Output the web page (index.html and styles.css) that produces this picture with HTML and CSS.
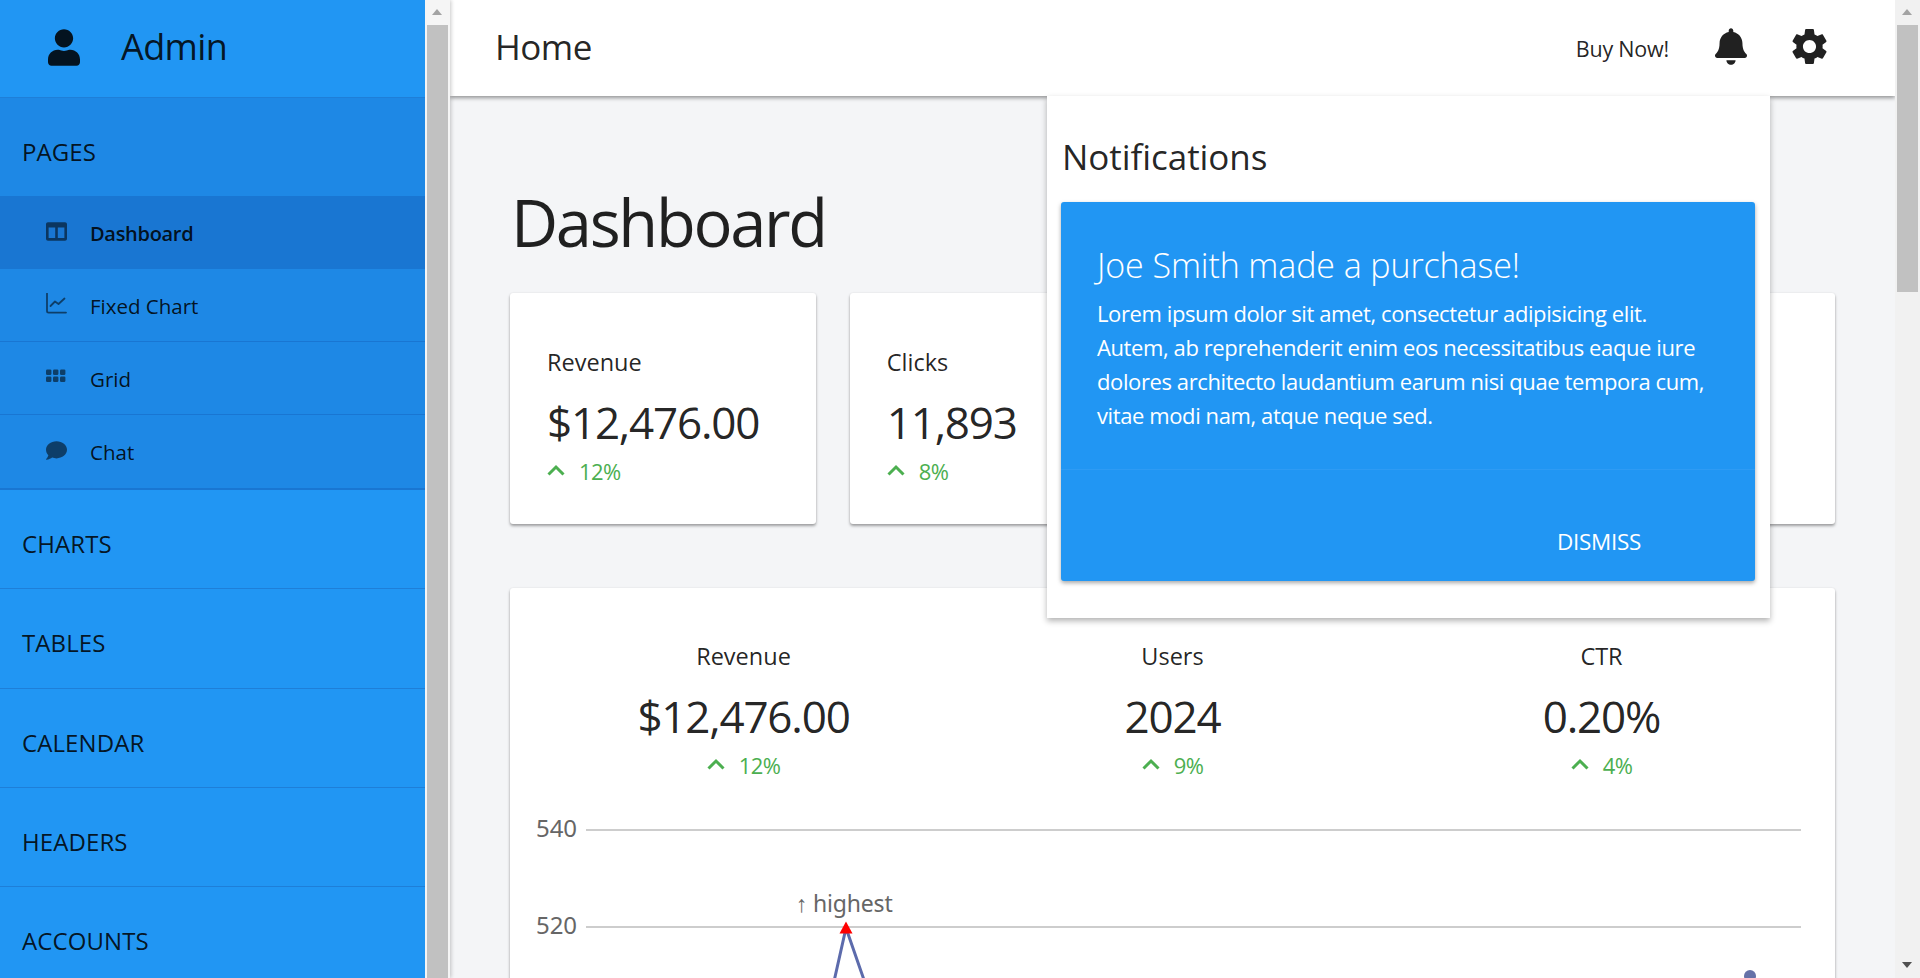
FILE: index.html
```html
<!DOCTYPE html>
<html lang="en">
<head>
<meta charset="utf-8">
<title>Dashboard</title>
<link rel="stylesheet" href="styles.css">
</head>
<body>
<div class="app">
  <aside class="side">
    <nav class="nav">
      <div class="brand">
        <svg class="brand-icon" viewBox="0 0 448 512"><path d="M224 256c70.7 0 128-57.3 128-128S294.7 0 224 0 96 57.3 96 128s57.3 128 128 128zm89.6 32h-16.7c-22.2 10.2-46.9 16-72.9 16s-50.6-5.8-72.9-16h-16.7C60.2 288 0 348.2 0 422.4V464c0 26.5 21.5 48 48 48h352c26.5 0 48-21.5 48-48v-41.6c0-74.2-60.2-134.4-134.4-134.4z"/></svg>
        <span class="brand-name">Admin</span>
      </div>
      <div class="group group-open">PAGES</div>
      <ul class="items">
        <li class="item item-active">
          <svg class="item-icon" viewBox="0 0 512 512"><path d="M464 32H48C21.49 32 0 53.49 0 80v352c0 26.51 21.49 48 48 48h416c26.51 0 48-21.49 48-48V80c0-26.51-21.49-48-48-48zM224 416H64V160h160v256zm224 0H288V160h160v256z"/></svg>
          <span>Dashboard</span>
        </li>
        <li class="item">
          <svg class="item-icon" viewBox="0 0 21 21"><path class="item-stroke" d="M1 0.5V18a1.600 1.600 0 0 0 1.600 1.600H20"/><path class="item-stroke" d="M4.500 13 9 8.500l3.500 2.500L18.500 5.500"/></svg>
          <span>Fixed Chart</span>
        </li>
        <li class="item">
          <svg class="item-icon" viewBox="0 0 21 21"><rect x="0" y="3.500" width="5.400" height="5.400" rx="1.200"/><rect x="7" y="3.500" width="5.400" height="5.400" rx="1.200"/><rect x="14" y="3.500" width="5.400" height="5.400" rx="1.200"/><rect x="0" y="10.500" width="5.400" height="5.400" rx="1.200"/><rect x="7" y="10.500" width="5.400" height="5.400" rx="1.200"/><rect x="14" y="10.500" width="5.400" height="5.400" rx="1.200"/></svg>
          <span>Grid</span>
        </li>
        <li class="item">
          <svg class="item-icon" viewBox="0 0 512 512"><path d="M256 32C114.6 32 0 125.1 0 240c0 49.6 21.4 95 57 130.7C44.5 421.1 2.7 466 2.2 466.5c-2.2 2.3-2.8 5.7-1.5 8.7S4.8 480 8 480c66.3 0 116-31.8 140.6-51.4 32.7 12.3 69 19.4 107.4 19.4 141.4 0 256-93.1 256-208S397.4 32 256 32z"/></svg>
          <span>Chat</span>
        </li>
      </ul>
      <div class="group">CHARTS</div>
      <div class="group">TABLES</div>
      <div class="group">CALENDAR</div>
      <div class="group">HEADERS</div>
      <div class="group">ACCOUNTS</div>
    </nav>
    <div class="scrollbar scrollbar-side">
      <div class="arrow-up"></div>
      <div class="thumb thumb-long"></div>
    </div>
  </aside>

  <main class="main">
    <header class="topbar">
      <span class="page-title">Home</span>
      <div class="top-actions">
        <span class="buy">Buy Now!</span>
        <svg class="bell" viewBox="0 0 448 512"><path d="M224 512c35.32 0 63.97-28.65 63.97-64H160.03c0 35.35 28.65 64 63.97 64zm215.39-149.71c-19.32-20.76-55.47-51.99-55.47-154.29 0-77.7-54.48-139.9-127.94-155.16V32c0-17.67-14.32-32-31.98-32s-31.98 14.33-31.98 32v20.84C118.56 68.1 64.08 130.3 64.08 208c0 102.3-36.15 133.53-55.47 154.29-6 6.45-8.66 14.16-8.61 21.71.11 16.4 12.98 32 32.1 32h383.8c19.12 0 32-15.6 32.1-32 .05-7.55-2.61-15.27-8.61-21.71z"/></svg>
        <svg class="gear" viewBox="2.4 2 19.2 20"><path d="M19.14 12.94c.04-.3.06-.61.06-.94 0-.32-.02-.64-.07-.94l2.03-1.58c.18-.14.23-.41.12-.61l-1.92-3.32c-.12-.22-.37-.29-.59-.22l-2.39.96c-.5-.38-1.03-.7-1.62-.94l-.36-2.54c-.04-.24-.24-.41-.48-.41h-3.84c-.24 0-.43.17-.47.41l-.36 2.54c-.59.24-1.13.57-1.62.94l-2.39-.96c-.22-.08-.47 0-.59.22L2.74 8.87c-.12.21-.08.47.12.61l2.03 1.58c-.05.3-.09.63-.09.94s.02.64.07.94l-2.03 1.58c-.18.14-.23.41-.12.61l1.92 3.32c.12.22.37.29.59.22l2.39-.96c.5.38 1.03.7 1.62.94l.36 2.54c.05.24.24.41.48.41h3.84c.24 0 .44-.17.47-.41l.36-2.54c.59-.24 1.13-.56 1.62-.94l2.39.96c.22.08.47 0 .59-.22l1.92-3.32c.12-.22.07-.47-.12-.61l-2.01-1.58zM12 15.6c-1.98 0-3.6-1.62-3.6-3.6s1.62-3.6 3.6-3.6 3.6 1.62 3.6 3.6-1.62 3.6-3.6 3.6z"/></svg>
      </div>
    </header>

    <section class="content">
      <h1 class="heading">Dashboard</h1>
      <div class="stat-row">
        <article class="card stat-card">
          <div class="stat-label">Revenue</div>
          <div class="stat-value">$12,476.00</div>
          <div class="delta"><svg class="chev" viewBox="0 0 18 12"><path d="M1.5 10.5 9 3l7.5 7.5"/></svg><span>12%</span></div>
        </article>
        <article class="card stat-card">
          <div class="stat-label">Clicks</div>
          <div class="stat-value">11,893</div>
          <div class="delta"><svg class="chev" viewBox="0 0 18 12"><path d="M1.5 10.5 9 3l7.5 7.5"/></svg><span>8%</span></div>
        </article>
        <article class="card stat-card"></article>
        <article class="card stat-card"></article>
      </div>

      <article class="card chart-card">
        <div class="summary">
          <div class="summary-col">
            <div class="stat-label">Revenue</div>
            <div class="stat-value">$12,476.00</div>
            <div class="delta"><svg class="chev" viewBox="0 0 18 12"><path d="M1.5 10.5 9 3l7.5 7.5"/></svg><span>12%</span></div>
          </div>
          <div class="summary-col">
            <div class="stat-label">Users</div>
            <div class="stat-value">2024</div>
            <div class="delta"><svg class="chev" viewBox="0 0 18 12"><path d="M1.5 10.5 9 3l7.5 7.5"/></svg><span>9%</span></div>
          </div>
          <div class="summary-col">
            <div class="stat-label">CTR</div>
            <div class="stat-value">0.20%</div>
            <div class="delta"><svg class="chev" viewBox="0 0 18 12"><path d="M1.5 10.5 9 3l7.5 7.5"/></svg><span>4%</span></div>
          </div>
        </div>
        <svg class="chart" viewBox="0 0 1325 240" width="1325" height="240">
          <line class="grid-line" x1="76" y1="30" x2="1291" y2="30"/>
          <line class="grid-line" x1="76" y1="127" x2="1291" y2="127"/>
          <text class="axis" x="26" y="37">540</text>
          <text class="axis" x="26" y="134">520</text>
          <text class="note" x="286" y="112">↑ highest</text>
          <path class="series" d="M314 226 336 128 370 226"/>
          <path class="peak" d="M336 121.500 342.500 133.500H329.500Z"/>
          <circle class="dot" cx="1240" cy="176" r="6"/>
        </svg>
      </article>
    </section>

    <div class="panel">
      <h2 class="panel-title">Notifications</h2>
      <div class="note-card">
        <div class="note-body">
          <h3 class="note-title">Joe Smith made a purchase!</h3>
          <p class="note-text">Lorem ipsum dolor sit amet, consectetur adipisicing elit. Autem, ab reprehenderit enim eos necessitatibus eaque iure dolores architecto laudantium earum nisi quae tempora cum, vitae modi nam, atque neque sed.</p>
        </div>
        <div class="note-actions"><span class="dismiss">DISMISS</span></div>
      </div>
    </div>
  </main>

  <div class="scrollbar scrollbar-page">
    <div class="arrow-up"></div>
    <div class="thumb thumb-page"></div>
    <div class="spacer"></div>
    <div class="arrow-down"></div>
  </div>
</div>
</body>
</html>
```

FILE: styles.css
```css
* { box-sizing: border-box; }
html, body { margin: 0; height: 100%; overflow: hidden; }
body {
  font-family: "Open Sans", "Noto Sans", sans-serif;
  color: rgba(0, 0, 0, .87);
  background: #f4f5f7;
}
h1, h2, h3, p, ul { margin: 0; padding: 0; list-style: none; font-weight: 400; }

.app { display: flex; height: 978px; overflow: hidden; }

/* sidebar */
.side { display: flex; flex: 0 0 450px; height: 978px; position: relative; z-index: 3; box-shadow: 1px 0 4px rgba(0,0,0,.22); }
.nav { width: 425px; height: 978px; overflow: hidden; background: #2196f3; }
.brand { display: flex; align-items: center; height: 98px; padding-left: 48px; border-bottom: 1px solid #1e7fd8; }
.brand-icon { width: 32px; height: 37px; fill: rgba(0,0,0,.87); margin-top: -3px; }
.brand-name { margin-left: 41px; font-size: 36px; font-weight: 400; line-height: 48px; margin-top: -3px; letter-spacing: -.6px; }
.group {
  display: flex; align-items: center;
  height: 99.33px; padding: 9px 0 0 22px;
  font-size: 24px; letter-spacing: .1px; font-weight: 400;
  border-bottom: 1px solid #1e7fd8;
}
.group-open { height: 98px; background: #1e88e5; border-bottom: 0; }
.items { background: #1e88e5; border-bottom: 2px solid #1976d2; }
.item {
  display: flex; align-items: center;
  height: 73px; padding: 1px 0 0 46px;
  font-size: 20.5px; letter-spacing: 0;
  border-bottom: 1px solid #1976d2;
}
.item:last-child { border-bottom: 0; }
.item-active { background: #1976d2; font-weight: 600; border-bottom: 0; font-size: 20px; letter-spacing: -.3px; }
.item-icon { width: 21px; height: 21px; flex: none; margin: -4px 23px 0 0; fill: rgba(0,0,0,.54); }
.item-stroke { fill: none; stroke: rgba(0,0,0,.54); stroke-width: 1.800; stroke-linecap: round; stroke-linejoin: round; }

/* scrollbars */
.scrollbar { display: flex; flex-direction: column; flex: none; background: #f1f1f1; }
.scrollbar-side { width: 25px; padding: 0 2px; background: #f5f5f5; }
.scrollbar-page { width: 25px; padding: 0 2px; }
.arrow-up { height: 25px; position: relative; flex: none; }
.arrow-up::before {
  content: ""; position: absolute; left: 5px; top: 9px;
  border: 5.500px solid transparent; border-top: 0; border-bottom: 6px solid #a3a3a3;
}
.arrow-down { height: 25px; position: relative; flex: none; }
.arrow-down::before {
  content: ""; position: absolute; left: 5px; top: 9px;
  border: 5.500px solid transparent; border-bottom: 0; border-top: 6px solid #505050;
}
.thumb { background: #c1c1c1; flex: none; }
.thumb-long { height: 953px; }
.thumb-page { height: 267px; }
.spacer { flex: 1; }

/* main */
.main { flex: 1; position: relative; min-width: 0; height: 978px; overflow: hidden; background: #f4f5f7; }
.topbar {
  display: flex; align-items: center; justify-content: space-between;
  height: 96px; padding: 0 68px 0 45px;
  background: #fff; box-shadow: 0 2px 4px rgba(0,0,0,.4);
  position: relative; z-index: 1;
}
.page-title { font-size: 35px; line-height: 48px; letter-spacing: -.5px; font-weight: 400; margin-top: -2px; }
.top-actions { display: flex; align-items: center; }
.buy { font-size: 21.5px; letter-spacing: -.2px; margin-right: 46px; margin-top: 1px; }
.bell { width: 32px; height: 37px; fill: #212121; margin-right: 45px; margin-top: -3px; }
.gear { width: 35px; height: 37px; fill: #212121; margin-top: -3px; }

.content { padding: 0 60px; }
.heading { font-size: 65px; line-height: 88px; padding-top: 82px; height: 197px; letter-spacing: -2.3px; font-weight: 400; margin-left: 1px; }
.card { background: #fff; border-radius: 3px; box-shadow: 0 2px 3px rgba(0,0,0,.35), 0 0 2px rgba(0,0,0,.08); }
.stat-row { display: grid; grid-template-columns: repeat(4, 1fr); gap: 34px; }
.stat-card { height: 231px; padding: 53px 0 0 37px; }
.stat-label { font-size: 23.5px; line-height: 32px; letter-spacing: 0; }
.stat-value { font-size: 44px; line-height: 58px; margin-top: 15px; letter-spacing: -1.2px; font-weight: 400; }
.delta { display: flex; align-items: center; margin-top: 5px; font-size: 22px; line-height: 30px; letter-spacing: -.6px; color: #4caf50; font-weight: 400; }
.chev { width: 18px; height: 12px; margin-right: 14px; fill: none; stroke: #4caf50; stroke-width: 3; margin-top: -2px; }

.chart-card { margin-top: 64px; height: 500px; padding-top: 52px; }
.summary { display: grid; grid-template-columns: repeat(3, 429px); padding-left: 19px; }
.summary-col { display: flex; flex-direction: column; align-items: center; }
.chart { display: block; margin-top: 20px; }
.grid-line { stroke: #bdbdbd; stroke-width: 1.500; }
.axis, .note { font-family: "Noto Sans", sans-serif; fill: #666; }
.axis { font-size: 24px; letter-spacing: -.1px; }
.note { font-size: 23px; letter-spacing: -.2px; }
.series { fill: none; stroke: #5c6bac; stroke-width: 3; }
.peak { fill: #f00; }
.dot { fill: #6672a8; }

/* notifications */
.panel {
  position: absolute; left: 597px; top: 96px; z-index: 2;
  width: 723px; height: 522px; padding: 0 15px 0 14px;
  background: #fff; box-shadow: 0 3px 6px rgba(0,0,0,.3);
}
.panel-title { font-size: 35px; line-height: 46px; padding-top: 38px; height: 106px; letter-spacing: -.05px; margin-left: 1px; font-weight: 400; }
.note-card { height: 379px; background: #2196f3; color: #fff; border-radius: 3px; box-shadow: 0 2px 4px rgba(0,0,0,.35); display: flex; flex-direction: column; }
.note-body { height: 268px; padding: 40px 36px 0; border-bottom: 1px solid #2e9bf4; }
.note-title { font-size: 34px; line-height: 46px; letter-spacing: -.1px; font-weight: 300; }
.note-text { font-size: 22px; line-height: 34px; letter-spacing: -.4px; margin-top: 8px; }
.note-actions { flex: 1; display: flex; justify-content: flex-end; padding: 55px 114px 0 0; }
.dismiss { font-size: 22.5px; line-height: 34px; letter-spacing: -.3px; }
```
